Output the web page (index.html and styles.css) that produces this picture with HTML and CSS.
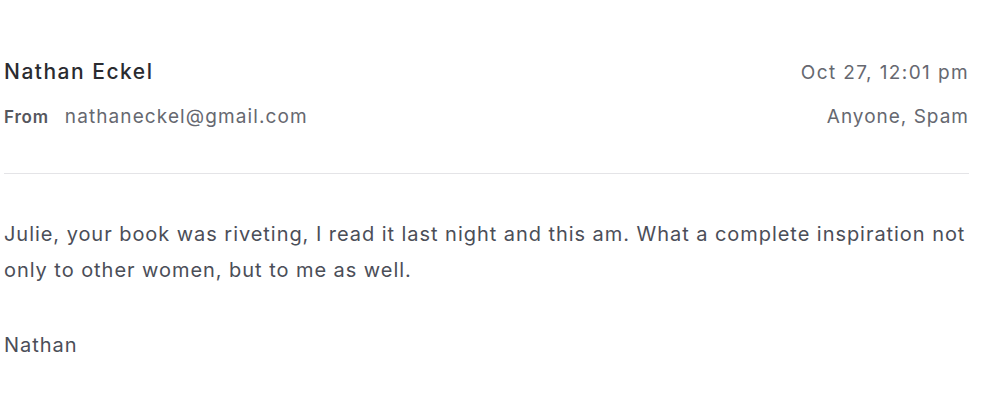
FILE: index.html
```html
<!DOCTYPE html>
<html>
<head>
<meta charset="utf-8">
<link rel="stylesheet" href="styles.css">
</head>
<body>
<div class="mail">
  <div class="header">
    <div class="row">
      <div class="name">Nathan Eckel</div>
      <div class="date">Oct 27, 12:01 pm</div>
    </div>
    <div class="row row2">
      <div class="from"><span class="label">From</span><span class="addr">nathaneckel@gmail.com</span></div>
      <div class="tags">Anyone, Spam</div>
    </div>
  </div>
  <div class="body">
    <p>Julie, your book was riveting, I read it last night and this am. What a complete inspiration not only to other women, but to me as well.</p>
    <p>Nathan</p>
  </div>
</div>
</body>
</html>
```
FILE: styles.css
```css
html, body {
  margin: 0;
  padding: 0;
  background: #ffffff;
}
body {
  font-family: Inter, "Noto Sans", sans-serif;
  color: #4b4e58;
}
.mail {
  padding: 57px 19px 0 4px;
}
.header {
  border-bottom: 1px solid #e4e4e7;
  padding-bottom: 41px;
}
.row {
  display: flex;
  justify-content: space-between;
  align-items: baseline;
  line-height: 30px;
}
.row2 {
  margin-top: 14px;
}
.name {
  font-size: 21px;
  font-weight: 500;
  letter-spacing: 1.5px;
  color: #2a2b30;
}
.date {
  font-size: 19px;
  letter-spacing: 1.4px;
  color: #666870;
}
.tags {
  font-size: 19px;
  letter-spacing: 1px;
  color: #666870;
}
.label {
  font-size: 17px;
  font-weight: 600;
  letter-spacing: 0.8px;
  color: #55575e;
  margin-right: 16px;
}
.addr {
  font-size: 19px;
  letter-spacing: 1.1px;
  color: #666870;
}
.body {
  padding-top: 42px;
  font-size: 20px;
  letter-spacing: 0.95px;
  line-height: 36px;
}
.body p {
  margin: 0 0 39px 0;
}
```
